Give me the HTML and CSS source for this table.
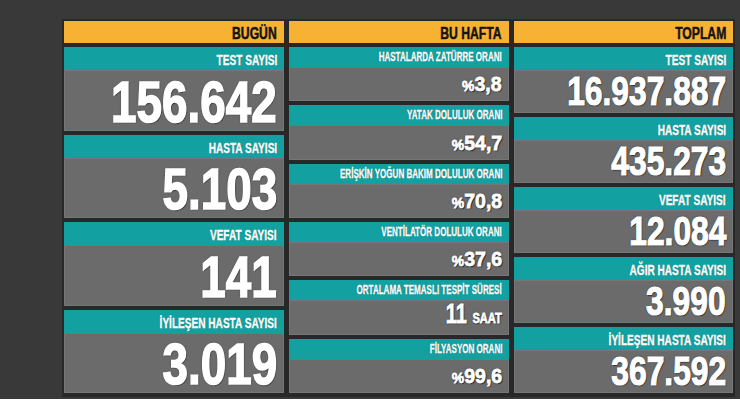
FILE: index.html
```html
<!DOCTYPE html>
<html lang="tr">
<head>
<meta charset="utf-8">
<title>Koronavirüs Tablosu</title>
<link rel="stylesheet" href="styles.css">
</head>
<body>
<div class="screen">
  <div class="board">
    <section class="col col-today">
      <div class="head"><span>BUGÜN</span></div>
      <div class="cards">
        <div class="card"><div class="label"><span>TEST SAYISI</span></div><div class="value"><span>156.642</span></div></div>
        <div class="card"><div class="label"><span>HASTA SAYISI</span></div><div class="value"><span>5.103</span></div></div>
        <div class="card"><div class="label"><span>VEFAT SAYISI</span></div><div class="value"><span>141</span></div></div>
        <div class="card"><div class="label"><span>İYİLEŞEN HASTA SAYISI</span></div><div class="value"><span>3.019</span></div></div>
      </div>
    </section>
    <section class="col col-week">
      <div class="head"><span>BU HAFTA</span></div>
      <div class="cards">
        <div class="card"><div class="label"><span>HASTALARDA ZATÜRRE ORANI</span></div><div class="value"><span><small>%</small>3,8</span></div></div>
        <div class="card"><div class="label"><span>YATAK DOLULUK ORANI</span></div><div class="value"><span><small>%</small>54,7</span></div></div>
        <div class="card"><div class="label"><span>ERİŞKİN YOĞUN BAKIM DOLULUK ORANI</span></div><div class="value"><span><small>%</small>70,8</span></div></div>
        <div class="card"><div class="label"><span>VENTİLATÖR DOLULUK ORANI</span></div><div class="value"><span><small>%</small>37,6</span></div></div>
        <div class="card"><div class="label"><span>ORTALAMA TEMASLI TESPİT SÜRESİ</span></div><div class="value"><span class="hours">11 <small>SAAT</small></span></div></div>
        <div class="card"><div class="label"><span>FİLYASYON ORANI</span></div><div class="value"><span><small>%</small>99,6</span></div></div>
      </div>
    </section>
    <section class="col col-total">
      <div class="head"><span>TOPLAM</span></div>
      <div class="cards">
        <div class="card"><div class="label"><span>TEST SAYISI</span></div><div class="value"><span>16.937.887</span></div></div>
        <div class="card"><div class="label"><span>HASTA SAYISI</span></div><div class="value"><span>435.273</span></div></div>
        <div class="card"><div class="label"><span>VEFAT SAYISI</span></div><div class="value"><span>12.084</span></div></div>
        <div class="card"><div class="label"><span>AĞIR HASTA SAYISI</span></div><div class="value"><span>3.990</span></div></div>
        <div class="card"><div class="label"><span>İYİLEŞEN HASTA SAYISI</span></div><div class="value"><span>367.592</span></div></div>
      </div>
    </section>
  </div>
</div>
</body>
</html>
```
FILE: styles.css
```css
html, body {
  margin: 0;
  padding: 0;
  background: #ffffff;
}

body {
  font-family: "Liberation Sans", Arial, sans-serif;
  font-weight: bold;
}

.screen {
  box-sizing: border-box;
  height: 399px;
  background: #393939;
  padding: 19px 0 0 62px;
}

.board {
  box-sizing: border-box;
  width: 673px;
  height: 378px;
  padding: 2px 2px 4px;
  background: #282828;
  display: grid;
  grid-template-columns: 220px 220px 219px;
  column-gap: 5px;
}

.col {
  display: flex;
  flex-direction: column;
  gap: 4px;
  min-width: 0;
}

.head {
  box-sizing: border-box;
  height: 22px;
  padding: 5px 7px 0 0;
  background: #f7b234;
  color: #141414;
  font-size: 16px;
  line-height: 16px;
  display: flex;
  justify-content: flex-end;
  white-space: nowrap;
  -webkit-text-stroke: 0.5px #141414;
}

.head span {
  display: inline-block;
  transform: scaleX(0.76);
  transform-origin: right center;
}

.cards {
  flex: 1;
  display: flex;
  flex-direction: column;
  gap: 4px;
}

.card {
  flex: 1;
  display: flex;
  flex-direction: column;
  min-height: 0;
}

.label {
  box-sizing: border-box;
  height: 23px;
  padding: 6px 7px 0 0;
  background: #12a1a0;
  color: #ffffff;
  font-size: 14px;
  line-height: 14px;
  display: flex;
  justify-content: flex-end;
  white-space: nowrap;
  -webkit-text-stroke: 0.4px #ffffff;
  text-shadow: 0 0 1px rgba(0, 0, 0, 0.5);
}

.label span {
  display: inline-block;
  transform: scaleX(0.72);
  transform-origin: right center;
}

.value {
  flex: 1;
  background: #6b6b6b;
  box-shadow: inset 0 0 0 1px rgba(255, 255, 255, 0.08);
  display: flex;
  justify-content: flex-end;
  align-items: flex-end;
  padding: 0 7px 0 0;
  color: #ffffff;
  white-space: nowrap;
  line-height: 1;
  text-shadow: 0 0 2px #1a1a1a, 1px 1px 1px #1a1a1a;
}

.value span {
  display: inline-block;
  transform-origin: right bottom;
}

.col-today .value {
  font-size: 58px;
  -webkit-text-stroke: 1.6px #ffffff;
}

.col-today .value span {
  transform: scaleX(0.79);
}

.col-total .value {
  font-size: 41px;
  padding-bottom: 1px;
  -webkit-text-stroke: 1.2px #ffffff;
}

.col-total .value span {
  transform: scaleX(0.775);
}

.col-total .label span {
  transform: scaleX(0.72);
}

.col-week .label {
  height: 20px;
  padding-top: 4px;
  font-size: 12px;
  line-height: 12px;
  -webkit-text-stroke: 0.3px #ffffff;
}

.col-week .label span {
  transform: scaleX(0.67);
}

.col-week .value {
  font-size: 21px;
  padding-bottom: 7px;
  -webkit-text-stroke: 0.8px #ffffff;
}

.col-week .value span {
  transform: scaleX(0.93);
}

.col-week .value small {
  font-size: 15px;
}

.col-week .value span.hours {
  font-size: 27px;
  transform: scaleX(0.74);
}

.col-week .value span.hours small {
  font-size: 15px;
}
```
